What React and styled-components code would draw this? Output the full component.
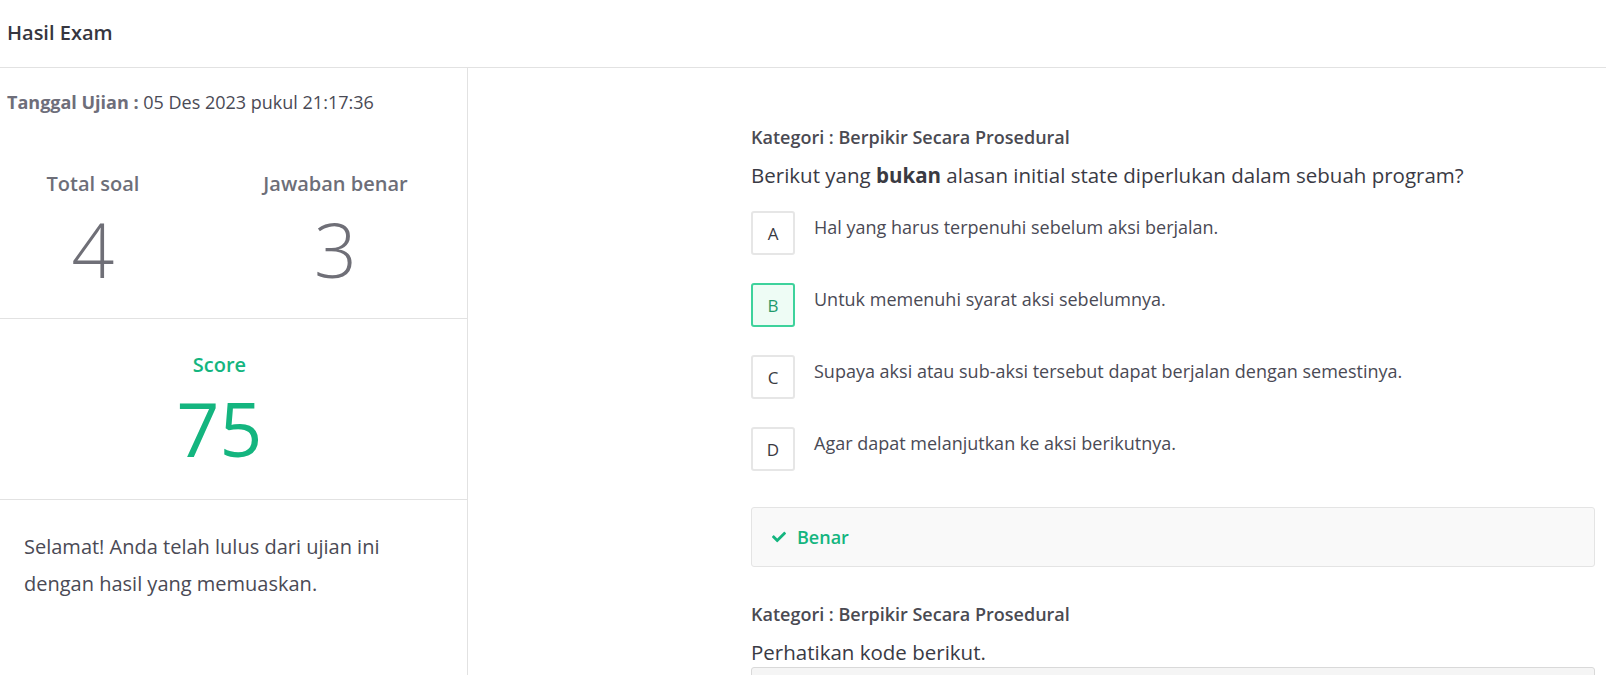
import React from "react";
import styled, { createGlobalStyle } from "styled-components";
import { FaCheck } from "react-icons/fa";

const GlobalStyle = createGlobalStyle`
  * { box-sizing: border-box; }
  html, body { margin: 0; padding: 0; background: #fff; }
  body { font-family: "Open Sans", "Noto Sans", sans-serif; color: #3f3f48; }
`;

const GREEN = "#14b57f";

const Page = styled.div`
  width: 1606px;
  height: 675px;
  overflow: hidden;
  display: flex;
  flex-direction: column;
`;

const Header = styled.header`
  height: 68px;
  flex: none;
  border-bottom: 1px solid #e2e2e2;
  display: flex;
  align-items: center;
  padding: 0 7px 2px;
`;

const Title = styled.h1`
  margin: 0;
  font-size: 20px;
  font-weight: 600;
  color: #363640;
`;

const Body = styled.div`
  flex: 1;
  display: grid;
  grid-template-columns: 468px 1fr;
  min-height: 0;
`;

const Sidebar = styled.aside`
  border-right: 1px solid #e2e2e2;
  display: flex;
  flex-direction: column;
`;

const Section = styled.section`
  border-bottom: ${(p) => (p.$last ? "none" : "1px solid #e2e2e2")};
  padding: ${(p) => p.$pad};
  text-align: ${(p) => p.$align || "left"};
`;

const DateLine = styled.div`
  font-size: 18px;
  line-height: 22px;
  color: #4a4a55;
  padding-left: 7px;
  b {
    font-weight: 700;
    color: #6e6e7a;
  }
`;

const Stats = styled.div`
  display: grid;
  grid-template-columns: 186px 1fr;
  margin-top: 59px;
`;

const Stat = styled.div`
  text-align: center;
  padding-left: ${(p) => p.$offset || 0}px;
`;

const StatLabel = styled.div`
  font-size: 20px;
  font-weight: 600;
  line-height: 24px;
  color: ${(p) => p.$color || "#6d6e78"};
`;

const BigNumber = styled.div`
  font-size: 75px;
  font-weight: ${(p) => p.$weight || 300};
  line-height: 90px;
  margin-top: ${(p) => p.$gap || 8}px;
  color: ${(p) => p.$color || "#6f6f77"};
`;

const Message = styled.p`
  margin: 0;
  font-size: 20px;
  line-height: 37px;
  color: #4a4a55;
`;

const Main = styled.main`
  padding: 58px 11px 0 283px;
  display: flex;
  flex-direction: column;
`;

const Category = styled.div`
  font-size: 18px;
  font-weight: 600;
  line-height: 22px;
  color: #4a4a52;
  margin-top: ${(p) => p.$top || 0}px;
`;

const Question = styled.div`
  font-size: 20.5px;
  line-height: 28px;
  color: #3a3a44;
  margin-top: 13px;
  b { font-weight: 700; color: #3a3a42; }
`;

const Options = styled.div`
  display: flex;
  flex-direction: column;
  gap: 28px;
  margin-top: 22px;
`;

const OptionRow = styled.div`
  display: flex;
  align-items: flex-start;
  gap: 19px;
`;

const OptionKey = styled.div`
  width: 44px;
  height: 44px;
  flex: none;
  border-radius: 3px;
  border: ${(p) => (p.$picked ? "2px solid #3ed29c" : "2px solid #e6e6e6")};
  background: ${(p) => (p.$picked ? "#eefcf5" : "#fff")};
  color: ${(p) => (p.$picked ? "#1f9a6c" : "#3a3a42")};
  font-size: 17px;
  display: flex;
  align-items: center;
  justify-content: center;
`;

const OptionText = styled.div`
  font-size: 18px;
  line-height: 24px;
  padding-top: 4px;
  color: #4a4a55;
`;

const Result = styled.div`
  margin-top: 36px;
  height: 60px;
  border: 1px solid #e4e4e4;
  border-radius: 3px;
  background: #f9f9f9;
  display: flex;
  align-items: center;
  gap: 11px;
  padding: 0 20px 1px;
  color: ${GREEN};
  font-size: 18px;
  font-weight: 600;
  svg { width: 14px; height: 14px; }
`;

const CodeBox = styled.div`
  margin-top: 1px;
  height: 60px;
  border: 1px solid #d9d9d9;
  border-radius: 3px;
  background: #f5f5f5;
`;

const options = [
  { key: "A", text: "Hal yang harus terpenuhi sebelum aksi berjalan." },
  { key: "B", text: "Untuk memenuhi syarat aksi sebelumnya.", picked: true },
  { key: "C", text: "Supaya aksi atau sub-aksi tersebut dapat berjalan dengan semestinya." },
  { key: "D", text: "Agar dapat melanjutkan ke aksi berikutnya." },
];

export default function App() {
  return (
    <Page>
      <GlobalStyle />
      <Header>
        <Title>Hasil Exam</Title>
      </Header>
      <Body>
        <Sidebar>
          <Section $pad="23px 0 24px">
            <DateLine>
              <b>Tanggal Ujian :</b> 05 Des 2023 pukul 21:17:36
            </DateLine>
            <Stats>
              <Stat>
                <StatLabel>Total soal</StatLabel>
                <BigNumber>4</BigNumber>
              </Stat>
              <Stat $offset={18}>
                <StatLabel>Jawaban benar</StatLabel>
                <BigNumber>3</BigNumber>
              </Stat>
            </Stats>
          </Section>
          <Section $pad="34px 28px 26px 0" $align="center">
            <Stat>
              <StatLabel $color={GREEN}>Score</StatLabel>
              <BigNumber $color={GREEN} $gap={6} $weight={400}>75</BigNumber>
            </Stat>
          </Section>
          <Section $pad="28px 40px 0 24px" $last>
            <Message>
              Selamat! Anda telah lulus dari ujian ini dengan hasil yang memuaskan.
            </Message>
          </Section>
        </Sidebar>
        <Main>
          <Category>Kategori : Berpikir Secara Prosedural</Category>
          <Question>
            Berikut yang <b>bukan</b> alasan initial state diperlukan dalam sebuah program?
          </Question>
          <Options>
            {options.map((o) => (
              <OptionRow key={o.key}>
                <OptionKey $picked={o.picked}>{o.key}</OptionKey>
                <OptionText>{o.text}</OptionText>
              </OptionRow>
            ))}
          </Options>
          <Result>
            <FaCheck />
            Benar
          </Result>
          <Category $top={36}>Kategori : Berpikir Secara Prosedural</Category>
          <Question>Perhatikan kode berikut.</Question>
          <CodeBox />
        </Main>
      </Body>
    </Page>
  );
}
